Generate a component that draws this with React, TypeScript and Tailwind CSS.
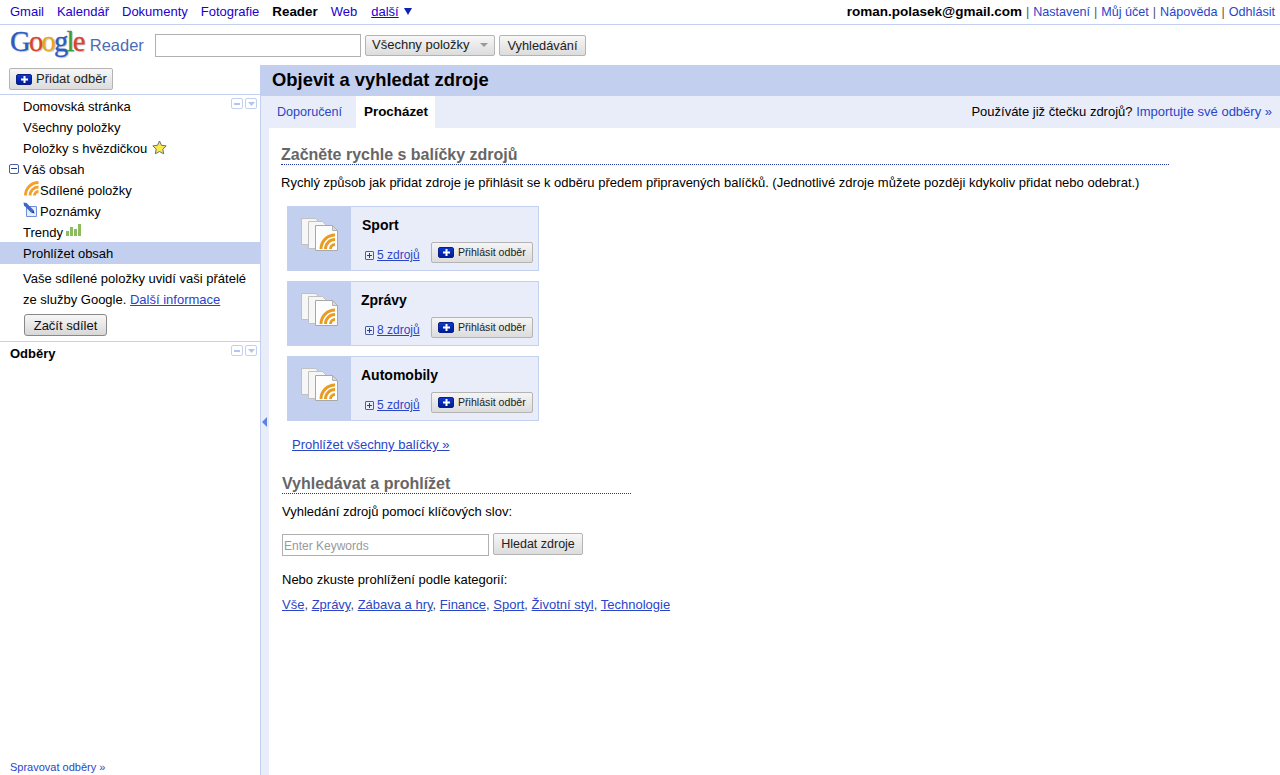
const FONT = "font-['Liberation_Sans',Arial,sans-serif]";

function PlusBadge() {
  return (
    <span className="inline-flex items-center justify-center shrink-0 rounded-[2px] bg-gradient-to-b from-[#1238c8] to-[#001c96] border border-[#0b1f8a] w-[16px] h-[11px]">
      <svg width="7" height="7" viewBox="0 0 7 7">
        <path d="M2.500 0h2v2.500H7v2H4.500V7h-2V4.500H0v-2h2.500z" fill="#fff" />
      </svg>
    </span>
  );
}

function SectionControls() {
  return (
    <div className="flex gap-[2px]">
      <span className="w-[12px] h-[11px] border border-[#c3d0ef] rounded-[2px] flex items-center justify-center">
        <span className="block w-[6px] h-[2px] bg-[#b4c4ec]" />
      </span>
      <span className="w-[12px] h-[11px] border border-[#c3d0ef] rounded-[2px] flex items-center justify-center">
        <svg width="7" height="4" viewBox="0 0 7 4"><path d="M0 0h7L3.500 4z" fill="#b4c4ec" /></svg>
      </span>
    </div>
  );
}

// the feed arcs in this UI open towards the bottom right corner
function RssIcon() {
  return (
    <svg width="16" height="15" viewBox="0 0 16 15" fill="none" stroke="#f2a02c" strokeWidth="2.800" className="shrink-0">
      <path d="M10.500 14.500a4 4 0 0 1 4-4" />
      <path d="M6 14.500a8.500 8.500 0 0 1 8.500-8.500" />
      <path d="M1.500 14.500a13 13 0 0 1 13-13" />
    </svg>
  );
}

function FeedStack() {
  return (
    <svg width="37" height="34" viewBox="0 0 37 34">
      <path d="M.5 1.500h14l5 5v21H.5z" fill="#f6f6f6" stroke="#c0c0c0" />
      <path d="M7.500 4.500h14l5 5v22h-19z" fill="#f6f6f6" stroke="#c0c0c0" />
      <path d="M14.500 8.500h17l5 5v20h-22z" fill="#fdfdfd" stroke="#a8a8a8" />
      <path d="M31.500 8.500v5h5z" fill="#dcdcdc" stroke="#b0b0b0" />
      <g fill="none" stroke="#e89c22" strokeWidth="2.900">
        <path d="M29.500 32a4.500 4.500 0 0 1 4.500-4.500" />
        <path d="M24.500 32a9.500 9.500 0 0 1 9.500-9.500" />
        <path d="M20 32a14 14 0 0 1 14-14" />
      </g>
    </svg>
  );
}

function Bundle({ name, count, titlePad }: { name: string; count: string; titlePad: string }) {
  return (
    <div className="w-[252px] h-[65px] border border-[#c3d0ef] bg-[#e9edf9] flex">
      <div className="w-[63px] bg-[#c3cfef] pl-[13px] pt-[10px] shrink-0">
        <FeedStack />
      </div>
      <div className="flex-1 relative">
        <div className={`text-[14px] font-bold text-black pt-[9px] leading-[18px] ${titlePad}`}>{name}</div>
        <div className="absolute left-[14px] top-[40px] flex items-center gap-[3px] text-[12px] leading-[16px]">
          <span className="w-[9px] h-[9px] border border-[#4a5f9e] rounded-[1px] flex items-center justify-center">
            <svg width="5" height="5" viewBox="0 0 5 5"><path d="M2 0h1v2h2v1H3v2H2V3H0V2h2z" fill="#27408b" /></svg>
          </span>
          <a className="text-[#2a45c8] underline">{count}</a>
        </div>
        <button className="absolute right-[5px] top-[35px] w-[102px] h-[21px] border border-[#b4b4b4] rounded-[2px] bg-gradient-to-b from-[#f5f5f5] to-[#dcdcdc] flex items-center pl-[6px] gap-[4px] text-[10.600px] text-[#222]">
          <PlusBadge />
          <span className="mt-[1px]">Přihlásit odběr</span>
        </button>
      </div>
    </div>
  );
}

export default function App() {
  const topLinks = ["Gmail", "Kalendář", "Dokumenty", "Fotografie"];
  const categories = ["Vše", "Zprávy", "Zábava a hry", "Finance", "Sport", "Životní styl", "Technologie"];

  return (
    <div className={`${FONT} w-[1280px] h-[775px] overflow-hidden bg-white text-[13px] text-black flex flex-col`}>
      {/* top bar */}
      <div className="h-[25px] shrink-0 border-b border-[#c3d0ef] flex justify-between items-center pl-[10px] pr-[5px]">
        <div className="flex items-center gap-[13px]">
          {topLinks.map((l) => (
            <a key={l} className="text-[#2200cc]">{l}</a>
          ))}
          <b className="text-[13.400px]">Reader</b>
          <a className="text-[#2200cc]">Web</a>
          <span className="flex items-center gap-[5px] text-[#2200cc] ml-[1px]">
            <a className="underline">další</a>
            <svg width="8" height="7" viewBox="0 0 8 7"><path d="M0 0h8L4 7z" fill="#0f22b0" /></svg>
          </span>
        </div>
        <div className="flex items-center gap-[4px] text-[12.600px]">
          <b className="text-[13.500px]">roman.polasek@gmail.com</b>
          <span className="text-[#555]">|</span><a className="text-[#2a45c8]">Nastavení</a>
          <span className="text-[#555]">|</span><a className="text-[#2a45c8]">Můj účet</a>
          <span className="text-[#555]">|</span><a className="text-[#2a45c8]">Nápověda</a>
          <span className="text-[#555]">|</span><a className="text-[#2a45c8]">Odhlásit</a>
        </div>
      </div>

      {/* search row */}
      <div className="h-[40px] shrink-0 flex items-center pl-[10px]">
        <div className="w-[145px] flex items-baseline mb-[5px]">
          <span className="font-['Liberation_Serif',serif] text-[28.500px] leading-none tracking-[-1.700px] [-webkit-text-stroke:0.3px] [text-shadow:1px_1px_1px_#c4c4c4]">
            <span className="text-[#2a5cc4]">G</span>
            <span className="text-[#d8432e]">o</span>
            <span className="text-[#e3a81e]">o</span>
            <span className="text-[#2a5cc4]">g</span>
            <span className="text-[#3c9a3c]">l</span>
            <span className="text-[#d8432e]">e</span>
          </span>
          <span className="text-[16.500px] text-[#4c6cb5] ml-[6px]">Reader</span>
        </div>
        <input className="w-[206px] h-[23px] border border-[#b0b0b0] outline-none" />
        <button className="ml-[4px] w-[130px] h-[21px] border border-[#b4b4b4] rounded-[2px] bg-gradient-to-b from-[#f7f7f7] to-[#dcdcdc] flex items-center justify-between pl-[6px] pr-[6px] text-[13px] text-[#222]">
          <span>Všechny položky</span>
          <svg width="8" height="4" viewBox="0 0 8 4"><path d="M0 0h8L4 4z" fill="#999" /></svg>
        </button>
        <button className="ml-[4px] w-[87px] h-[21px] border border-[#b4b4b4] rounded-[2px] bg-gradient-to-b from-[#f7f7f7] to-[#dcdcdc] text-[12.800px] text-[#222]">Vyhledávání</button>
      </div>

      <div className="flex-1 flex min-h-0">
        {/* sidebar */}
        <div className="w-[261px] shrink-0 border-r border-[#c3d0ef] flex flex-col relative">
          <div className="h-[30px] shrink-0 border-b border-[#c3d0ef] pl-[9px] pt-[3px]">
            <button className="w-[104px] h-[22px] border border-[#b4b4b4] rounded-[2px] bg-gradient-to-b from-[#f7f7f7] to-[#dcdcdc] flex items-center pl-[6px] gap-[4px] text-[13px] text-[#222]">
              <PlusBadge />
              <span>Přidat odběr</span>
            </button>
          </div>
          <div>
            <div className="flex justify-between pl-[23px] pr-[3px] h-[21px] pt-[3px]">
              <span className="leading-[18px]">Domovská stránka</span>
              <SectionControls />
            </div>
            <div className="pl-[23px] h-[21px] pt-[2px] flex items-center">Všechny položky</div>
            <div className="pl-[23px] h-[21px] pt-[2px] flex items-center gap-[5px]">
              <span>Položky s hvězdičkou</span>
              <svg width="15" height="15" viewBox="0 0 15 15" className="mb-[3px]"><path d="M7.500 1l2 4.300 4.700.6-3.400 3.200.9 4.700-4.200-2.300-4.200 2.300.9-4.700L.8 5.900l4.700-.6z" fill="#fbe94a" stroke="#5a6f9e" /></svg>
            </div>
            <div className="pl-[9px] h-[21px] pt-[2px] flex items-center gap-[4px]">
              <span className="w-[10px] h-[10px] border border-[#4a5f9e] rounded-[2px] flex items-center justify-center mb-[2px]">
                <span className="block w-[6px] h-[1px] bg-[#27408b]" />
              </span>
              <span>Váš obsah</span>
            </div>
            <div className="pl-[24px] h-[21px] pt-[2px] flex items-center">
              <span className="mb-[4px]"><RssIcon /></span>
              <span>Sdílené položky</span>
            </div>
            <div className="pl-[23px] h-[21px] pt-[2px] flex items-center">
              <svg width="17" height="16" viewBox="0 0 17 16" className="shrink-0 mb-[4px]">
                <path d="M3.500 4.500h10v10h-10z" fill="#e6edfb" stroke="#6f8fdc" />
                <path d="M.5.500l3 .5 7 7-2.500 2.500-7-7z" fill="#3f66c9" />
                <path d="M8 10.500l2.500-2.500 1 3.500z" fill="#223f8c" />
              </svg>
              <span>Poznámky</span>
            </div>
            <div className="pl-[23px] h-[21px] pt-[2px] flex items-center gap-[3px]">
              <span>Trendy</span>
              <svg width="15" height="12" viewBox="0 0 15 12" fill="#8dbb60" className="mb-[5px]">
                <path d="M0 7h3v5H0zM4 3h3v9H4zM8 5h3v7H8zM12 0h3v12h-3z" />
              </svg>
            </div>
            <div className="pl-[23px] h-[22px] pt-[2px] bg-[#c3cfef] flex items-center">Prohlížet obsah</div>
          </div>
          <div className="pl-[23px] pt-[4px] leading-[21px]">
            <div>Vaše sdílené položky uvidí vaši přátelé</div>
            <div>ze služby Google. <a className="text-[#2a45c8] underline">Další informace</a></div>
            <button className="mt-[4px] ml-[1px] w-[83px] h-[22px] border border-[#888] rounded-[3px] bg-gradient-to-b from-[#f7f7f7] to-[#d8d8d8] text-[13px] text-[#111]">Začít sdílet</button>
          </div>
          <div className="mt-[5px] border-t border-[#c3d0ef] pl-[10px] pr-[3px] pt-[3px] flex justify-between">
            <b className="leading-[16px] mt-[1px]">Odběry</b>
            <SectionControls />
          </div>
          <a className="mt-auto pl-[10px] text-[11px] leading-[13px] mb-[1px] text-[#2a45c8]">Spravovat odběry »</a>
        </div>

        {/* collapse strip */}
        <div className="w-0 relative">
          <svg className="absolute left-[1px] top-[352px]" width="5" height="10" viewBox="0 0 5 10"><path d="M5 0v10L0 5z" fill="#5f82e6" /></svg>
        </div>

        {/* main */}
        <div className="flex-1 flex flex-col min-w-0">
          <div className="h-[31px] shrink-0 bg-[#c3cfef] -ml-[1px] pl-[12px] text-[18.400px] font-bold leading-[30px]">Objevit a vyhledat zdroje</div>
          <div className="h-[32px] shrink-0 bg-[#e9edf9] flex items-center justify-between pr-[8px]">
            <div className="flex h-full items-stretch">
              <a className="w-[95px] pl-[16px] flex items-center text-[12.600px] text-[#2a45c8]">Doporučení</a>
              <span className="w-[79px] pl-[8px] bg-white font-bold flex items-center text-[13.400px]">Procházet</span>
            </div>
            <div>Používáte již čtečku zdrojů? <a className="text-[#2a45c8]">Importujte své odběry »</a></div>
          </div>
          <div className="flex-1 min-h-0 border-l-[8px] border-[#e9edf9] pl-[12px] pt-[18px]">
            <div className="w-[888px] border-b border-dotted border-[#2233aa] text-[16px] font-bold text-[#666] leading-[18px]">Začněte rychle s balíčky zdrojů</div>
            <p className="mt-[10px] leading-[16px]">Rychlý způsob jak přidat zdroje je přihlásit se k odběru předem připravených balíčků. (Jednotlivé zdroje můžete později kdykoliv přidat nebo odebrat.)</p>
            <div className="mt-[15px] ml-[6px] flex flex-col gap-[10px]">
              <Bundle name="Sport" count="5 zdrojů" titlePad="pl-[11px]" />
              <Bundle name="Zprávy" count="8 zdrojů" titlePad="pl-[10px]" />
              <Bundle name="Automobily" count="5 zdrojů" titlePad="pl-[10px]" />
            </div>
            <a className="block mt-[16px] ml-[11px] text-[#2a45c8] underline leading-[16px]">Prohlížet všechny balíčky »</a>
            <div className="mt-[22px] ml-[1px] w-[349px] border-b border-dotted border-[#2233aa] text-[16px] font-bold text-[#666] leading-[18px]">Vyhledávat a prohlížet</div>
            <p className="mt-[10px] ml-[1px] leading-[16px]">Vyhledání zdrojů pomocí klíčových slov:</p>
            <div className="mt-[13px] ml-[1px] flex items-start gap-[4px]">
              <input placeholder="Enter Keywords" className="mt-[1px] w-[207px] h-[22px] border border-[#b0b0b0] px-[1px] pt-[2px] text-[12px] outline-none placeholder:text-[#999]" />
              <button className="w-[90px] h-[22px] border border-[#b4b4b4] rounded-[2px] bg-gradient-to-b from-[#f7f7f7] to-[#dcdcdc] text-[12.500px] text-[#222]">Hledat zdroje</button>
            </div>
            <p className="mt-[16px] ml-[1px] leading-[16px]">Nebo zkuste prohlížení podle kategorií:</p>
            <div className="mt-[9px] ml-[1px] leading-[16px] text-[#444]">
              {categories.map((c, i) => (
                <span key={c}>
                  <a className="text-[#2a45c8] underline">{c}</a>
                  {i < categories.length - 1 ? ", " : ""}
                </span>
              ))}
            </div>
          </div>
        </div>
      </div>
    </div>
  );
}
